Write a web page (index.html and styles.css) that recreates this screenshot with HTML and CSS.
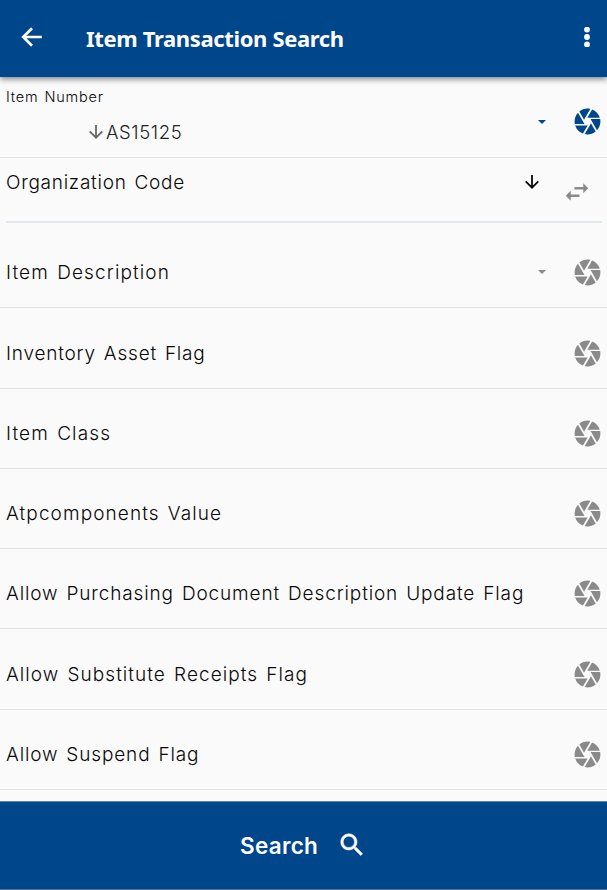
FILE: index.html
```html
<!DOCTYPE html>
<html lang="en">
<head>
<meta charset="utf-8">
<title>Item Transaction Search</title>
<link rel="stylesheet" href="styles.css">
</head>
<body>
<svg class="defs" aria-hidden="true">
  <symbol id="camera" viewBox="0 0 24 24"><path d="M9.4 10.5l4.77-8.26C13.47 2.09 12.75 2 12 2c-2.4 0-4.6.85-6.32 2.25l3.66 6.35.06-.1zM21.54 9c-.92-2.92-3.15-5.26-6-6.34L11.88 9h9.66zm.26 1h-7.49l.29.5 4.76 8.25C21 16.97 22 14.61 22 12c0-.69-.07-1.35-.2-2zM8.54 12l-3.9-6.75C3.01 7.03 2 9.39 2 12c0 .69.07 1.35.2 2h7.49l-1.15-2zm-6.08 3c.92 2.92 3.15 5.26 6 6.34L12.12 15H2.46zm11.27 0l-3.9 6.76c.7.15 1.42.24 2.17.24 2.4 0 4.6-.85 6.32-2.25l-3.66-6.35-.93 1.6z"/></symbol>
  <symbol id="down" viewBox="0 0 14 14"><path d="M7 0v12.4M.7 6.4L7 12.7l6.3-6.3" fill="none" stroke="currentColor" stroke-width="1.8"/></symbol>
  <symbol id="caret" viewBox="0 0 8 4"><path d="M0 0h8L4 4z"/></symbol>
</svg>
<header class="bar">
  <svg class="back" viewBox="0 0 22 20"><path d="M20.8 10H2M11 1.2L2.2 10l8.8 8.8" fill="none" stroke="#fff" stroke-width="2.7"/></svg>
  <h1 class="title">Item Transaction Search</h1>
  <svg class="more" viewBox="0 0 6 20"><circle cx="3" cy="2.6" r="2.9"/><circle cx="3" cy="10" r="2.9"/><circle cx="3" cy="17.4" r="2.9"/></svg>
</header>
<main class="list">
  <section class="row first">
    <div class="field">
      <div class="small">Item Number</div>
      <div class="value"><svg class="down"><use href="#down"/></svg><span class="code">AS15125</span></div>
    </div>
    <svg class="caret"><use href="#caret"/></svg>
    <svg class="camera"><use href="#camera"/></svg>
  </section>
  <section class="org">
    <span class="label w-org">Organization Code</span>
    <svg class="down"><use href="#down"/></svg>
    <svg class="swap" viewBox="0 0 24 24"><path d="M6.99 11L3 15l3.99 4v-3H14v-2H6.99v-3zM21 9l-3.99-4v3H10v2h7.01v3L21 9z"/></svg>
  </section>
  <section class="row desc"><span class="label w-desc">Item Description</span><svg class="caret"><use href="#caret"/></svg><svg class="camera"><use href="#camera"/></svg></section>
  <section class="row tall"><span class="label w-inv">Inventory Asset Flag</span><svg class="camera"><use href="#camera"/></svg></section>
  <section class="row"><span class="label w-class">Item Class</span><svg class="camera"><use href="#camera"/></svg></section>
  <section class="row"><span class="label w-atp">Atpcomponents Value</span><svg class="camera"><use href="#camera"/></svg></section>
  <section class="row"><span class="label w-purch">Allow Purchasing Document Description Update Flag</span><svg class="camera"><use href="#camera"/></svg></section>
  <section class="row tall"><span class="label w-sub">Allow Substitute Receipts Flag</span><svg class="camera"><use href="#camera"/></svg></section>
  <section class="row"><span class="label w-susp">Allow Suspend Flag</span><svg class="camera"><use href="#camera"/></svg></section>
</main>
<footer class="search">
  <span class="search-text">Search</span>
  <svg class="glass" viewBox="0 0 24 24"><path d="M15.5 14h-.79l-.28-.27C15.41 12.59 16 11.11 16 9.5 16 5.91 13.09 3 9.5 3S3 5.91 3 9.5 5.91 16 9.5 16c1.61 0 3.09-.59 4.23-1.57l.27.28v.79l5 4.99L20.49 19l-4.99-5zm-6 0C7.01 14 5 11.99 5 9.5S7.01 5 9.5 5 14 7.01 14 9.5 11.99 14 9.5 14z"/></svg>
</footer>
</body>
</html>
```
FILE: styles.css
```css
* { box-sizing: border-box; }
body {
  margin: 0;
  height: 890px;
  display: flex;
  flex-direction: column;
  overflow: hidden;
  background: #fafafa;
  color: #080808;
  font-family: Inter, "Liberation Sans", sans-serif;
}
svg { display: block; flex: none; fill: currentColor; }
.defs { display: none; }
.bar {
  height: 77px;
  flex: none;
  display: flex;
  align-items: center;
  padding: 0 17px 3px 21px;
  background: #00468b;
  color: #fff;
  box-shadow: 0 2px 6px rgba(0, 0, 0, .5);
  z-index: 1;
}
.back { width: 22px; height: 20px; }
.title {
  margin: 2px auto 0 43px;
  font: 700 22px/30px "Noto Sans", "Open Sans", sans-serif;
  letter-spacing: -.35px;
  white-space: nowrap;
}
.more { width: 6px; height: 20px; }
.list { flex: none; height: 724px; }
.row {
  height: 80px;
  display: flex;
  align-items: center;
  padding: 9px 5px 0 6px;
  border-bottom: 1px solid #e1e3e5;
}
.tall { height: 81px; padding-top: 10px; }
.desc { height: 85px; padding-top: 14px; }
.first { height: 81px; color: #00468b; }
.field { flex: 1; align-self: stretch; color: #222; }
.small { font-size: 14.5px; line-height: 20px; margin-top: 1px; letter-spacing: .8px; word-spacing: 1px; font-weight: 350; color: #080808; }
.value { display: flex; align-items: center; margin: 13px 0 0 83px; height: 24px; color: #666; }
.code { margin-left: 3px; font-size: 18.5px; line-height: 24px; font-weight: 350; letter-spacing: .6px; color: #222; }
.down { width: 14px; height: 14px; }
.label { flex: 1; padding-top: 2px; font-size: 19px; line-height: 24px; font-weight: 350; white-space: nowrap; word-spacing: 1.8px; }
.w-org { padding-top: 1px; letter-spacing: .74px; }
.w-desc { letter-spacing: 1.12px; }
.w-inv { letter-spacing: .8px; }
.w-class { letter-spacing: 1.12px; }
.w-atp { letter-spacing: 1.09px; }
.w-purch { letter-spacing: .87px; }
.w-sub { letter-spacing: 1.05px; }
.w-susp { letter-spacing: .86px; }
.caret { width: 8px; height: 4px; margin-right: 26px; }
.camera { width: 31px; height: 31px; margin: 0 -1px 0 0; }
.row > .caret, .row > .camera { color: #8a8a8a; }
.first > .caret, .first > .camera { color: #00468b; }
.org {
  height: 65px;
  display: flex;
  align-items: flex-start;
  margin: 0 5px 0 6px;
  padding-top: 12px;
  border-bottom: 2px solid #e3e8ec;
}
.org .down { margin: 5px 23px 0 0; }
.swap { width: 30px; height: 30px; margin: 7px 10px 0 0; color: #8a8a8a; }
.search {
  flex: none;
  height: 89px;
  display: flex;
  align-items: center;
  padding-left: 240px;
  background: #00468b;
  color: #fff;
  border-top: 1px solid #5c87b2;
  border-bottom: 1px solid #5c6f85;
}
.search-text { width: 97px; font-size: 22.5px; font-weight: 600; line-height: 28px; letter-spacing: .3px; }
.glass { width: 30px; height: 30px; margin-top: -2px; stroke: currentColor; stroke-width: .4; }
```
